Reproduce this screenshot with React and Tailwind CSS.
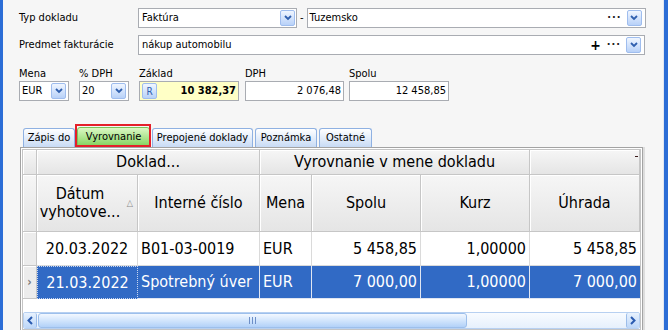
const font = "font-['DejaVu_Sans_Condensed','Liberation_Sans',sans-serif]";

function Drop() {
  return (
    <span className="flex h-[16px] w-[15px] shrink-0 items-center justify-center rounded-[2px] border border-[#9fbdee] bg-gradient-to-b from-[#f0f6ff] to-[#b8d1f8]">
      <svg width="8" height="6" viewBox="0 0 8 6">
        <path d="M1 1 L4 4 L7 1" stroke="#2f5fae" strokeWidth="1.8" fill="none" />
      </svg>
    </span>
  );
}

function Dots() {
  return <span className="text-[11px] font-bold leading-none tracking-[1px] text-[#222]">···</span>;
}

function Tab({ label, w, active }) {
  if (active) {
    return (
      <div className={`relative mr-[2px] flex h-[20px] ${w} items-center justify-center rounded-t-[3px] border border-[#7cc25a] bg-gradient-to-b from-[#dcf8c4] to-[#82d35c] text-[11px] text-black`}>
        {label}
        <div className="absolute -left-[3px] -right-[2px] -top-[4px] -bottom-[1px] border-2 border-[#e4202a]" />
      </div>
    );
  }
  return (
    <div className={`mr-[2px] flex h-[19px] ${w} items-center justify-center rounded-t-[3px] border border-b-0 border-[#8fb1e2] bg-gradient-to-b from-[#ffffff] to-[#c8dbf5] text-[11px] text-black`}>
      {label}
    </div>
  );
}

const hd = "border-r border-b border-[#c6c6c6] bg-gradient-to-b from-[#f6f6f6] to-[#e5e5e5] shadow-[inset_1px_1px_0_#ffffff]";

export default function App() {
  return (
    <div className={`flex h-[330px] w-[668px] overflow-hidden bg-[#f6f6f6] ${font}`}>
      <div className="w-[3px] shrink-0 bg-[#2c6dd6]" />
      <div className="flex w-[660px] flex-col pl-[16px] text-[11px] text-black">
        {/* Typ dokladu */}
        <div className="mt-[8px] flex h-[20px] items-center">
          <div className="w-[119px]">Typ dokladu</div>
          <div className="flex h-[20px] w-[159px] items-center justify-between border border-[#a9acb2] bg-white pl-[3px] pr-[1px]">
            <span>Faktúra</span>
            <Drop />
          </div>
          <span className="mx-[3px]">-</span>
          <div className="flex h-[20px] w-[339px] items-center border border-[#a9acb2] bg-white pl-[2px] pr-[3px]">
            <span className="flex-1">Tuzemsko</span>
            <span className="mr-[5px]"><Dots /></span>
            <Drop />
          </div>
        </div>
        {/* Predmet */}
        <div className="mt-[7px] flex h-[20px] items-center">
          <div className="w-[119px]">Predmet fakturácie</div>
          <div className="flex h-[20px] w-[507px] items-center border border-[#a9acb2] bg-white pl-[3px] pr-[3px]">
            <span className="flex-1">nákup automobilu</span>
            <span className="mr-[6px] text-[14px] font-bold leading-none">+</span>
            <span className="mr-[5px]"><Dots /></span>
            <Drop />
          </div>
        </div>
        {/* amounts */}
        <div className="mt-[12px] flex">
          <div className="w-[50px]">
            <div className="h-[14px] leading-[14px]">Mena</div>
            <div className="flex h-[20px] items-center justify-between border border-[#a9acb2] bg-white pl-[2px] pr-[2px]">
              <span>EUR</span>
              <Drop />
            </div>
          </div>
          <div className="ml-[10px] w-[50px]">
            <div className="h-[14px] leading-[14px]">% DPH</div>
            <div className="flex h-[20px] items-center justify-between border border-[#a9acb2] bg-white pl-[2px] pr-[2px]">
              <span>20</span>
              <Drop />
            </div>
          </div>
          <div className="ml-[10px] w-[100px]">
            <div className="h-[14px] leading-[14px]">Základ</div>
            <div className="flex h-[20px] items-center justify-between border border-[#a9acb2] bg-[#ffffc6] pl-[2px] pr-[2px]">
              <span className="flex h-[16px] w-[15px] items-center justify-center rounded-[2px] border border-[#9fbdee] bg-gradient-to-b from-[#f0f6ff] to-[#b8d1f8] text-[10px] text-[#2f5fae]">R</span>
              <span className="font-bold">10 382,37</span>
            </div>
          </div>
          <div className="ml-[6px] w-[99px]">
            <div className="h-[14px] leading-[14px]">DPH</div>
            <div className="flex h-[20px] items-center justify-end border border-[#a9acb2] bg-white pr-[2px]">
              2 076,48
            </div>
          </div>
          <div className="ml-[5px] w-[100px]">
            <div className="h-[14px] leading-[14px]">Spolu</div>
            <div className="flex h-[20px] items-center justify-end border border-[#a9acb2] bg-white pr-[2px]">
              12 458,85
            </div>
          </div>
        </div>
        {/* tabs */}
        <div className="ml-[4px] mt-[26px] flex h-[20px] items-end">
          <Tab label="Zápis do" w="w-[52px]" />
          <Tab label="Vyrovnanie" w="w-[73px]" active />
          <Tab label="Prepojené doklady" w="w-[101px]" />
          <Tab label="Poznámka" w="w-[62px]" />
          <Tab label="Ostatné" w="w-[53px]" />
        </div>
        {/* grid frame */}
        <div className="ml-[1px] w-[623px] flex-1 border border-[#a3a3a3] bg-white p-[1px] shadow-[2px_0_0_#dddddd]">
          <div className="h-full border border-[#c4c4c4] bg-white">
            <div className="grid grid-cols-[14px_101px_122px_52px_109px_109px_110px] text-[16px] text-black">
              {/* band row */}
              <div className={`h-[25px] ${hd}`} />
              <div className={`col-span-2 flex h-[25px] items-center justify-center ${hd}`}>Doklad...</div>
              <div className={`col-span-3 flex h-[25px] items-center justify-center ${hd}`}>Vyrovnanie v mene dokladu</div>
              <div className={`relative h-[25px] ${hd}`}>
                <div className="absolute right-[1px] top-[6px] h-[1px] w-[3px] bg-[#3a1a1a]" />
              </div>
              {/* column headers */}
              <div className={`h-[57px] ${hd}`} />
              <div className={`relative flex h-[57px] items-center justify-center pr-[14px] text-center ${hd}`}>
                <div className="flex flex-col items-center leading-[18px]">
                  <span>Dátum</span>
                  <span>vyhotove...</span>
                </div>
                <span className="absolute right-[4px] top-[24px] text-[9px] leading-none text-[#8a8a8a]">△</span>
              </div>
              <div className={`flex h-[57px] items-center justify-center ${hd}`}>Interné číslo</div>
              <div className={`flex h-[57px] items-center justify-center ${hd}`}>Mena</div>
              <div className={`flex h-[57px] items-center justify-center ${hd}`}>Spolu</div>
              <div className={`flex h-[57px] items-center justify-center ${hd}`}>Kurz</div>
              <div className={`flex h-[57px] items-center justify-center ${hd}`}>Úhrada</div>
              {/* row 1 */}
              <div className="h-[34px] border-r border-b border-[#c6c6c6] bg-[#ececec] shadow-[inset_1px_1px_0_#ffffff]" />
              <div className="flex h-[34px] items-center justify-center border-r border-b border-[#dadada]">20.03.2022</div>
              <div className="flex h-[34px] items-center border-r border-b border-[#dadada] pl-[3px]">B01-03-0019</div>
              <div className="flex h-[34px] items-center border-r border-b border-[#dadada] pl-[3px]">EUR</div>
              <div className="flex h-[34px] items-center justify-end border-r border-b border-[#dadada] pr-[3px]">5 458,85</div>
              <div className="flex h-[34px] items-center justify-end border-r border-b border-[#dadada] pr-[3px]">1,00000</div>
              <div className="flex h-[34px] items-center justify-end border-b border-[#dadada] pr-[3px]">5 458,85</div>
              {/* row 2 selected */}
              <div className="flex h-[33px] items-center justify-center border-r border-b border-[#c6c6c6] bg-[#ececec] text-[12px] font-bold text-[#7a7a7a] shadow-[inset_1px_1px_0_#ffffff]">›</div>
              <div className="flex h-[33px] items-center justify-center border border-dotted border-[#c8d6f0] bg-[#316ac5] text-white">21.03.2022</div>
              <div className="flex h-[33px] items-center border-r border-b border-[#e0e6f2] bg-[#316ac5] pl-[3px] text-white">Spotrebný úver</div>
              <div className="flex h-[33px] items-center border-r border-b border-[#e0e6f2] bg-[#316ac5] pl-[3px] text-white">EUR</div>
              <div className="flex h-[33px] items-center justify-end border-r border-b border-[#e0e6f2] bg-[#316ac5] pr-[3px] text-white">7 000,00</div>
              <div className="flex h-[33px] items-center justify-end border-r border-b border-[#e0e6f2] bg-[#316ac5] pr-[3px] text-white">1,00000</div>
              <div className="flex h-[33px] items-center justify-end border-b border-[#e0e6f2] bg-[#316ac5] pr-[3px] text-white">7 000,00</div>
            </div>
            {/* scrollbar */}
            <div className="mt-[13px] flex h-[17px] rounded-[2px] border border-[#b7d0f1] bg-gradient-to-b from-[#f8fbff] to-[#e6f0fc]">
              <div className="flex w-[13px] items-center justify-center rounded-[2px] border-r border-[#9cbde9] bg-gradient-to-b from-[#e8f2fe] to-[#bcd6f8]">
                <svg width="6" height="9" viewBox="0 0 6 9"><path d="M5 1 L1.5 4.5 L5 8" stroke="#2a5bb0" strokeWidth="2" fill="none" /></svg>
              </div>
              <div className="relative ml-[1px] flex w-[429px] items-center justify-center rounded-[3px] border border-[#9dbfeb] bg-gradient-to-b from-[#f3f8ff] via-[#d2e5fc] to-[#b2d1f8]">
                <svg width="7" height="7" viewBox="0 0 7 7"><path d="M0.5 0 V7 M3.5 0 V7 M6.5 0 V7" stroke="#6d8fc7" strokeWidth="1" /></svg>
              </div>
              <div className="flex-1" />
              <div className="flex w-[13px] items-center justify-center rounded-[2px] border-l border-[#9cbde9] bg-gradient-to-b from-[#e8f2fe] to-[#bcd6f8]">
                <svg width="6" height="9" viewBox="0 0 6 9"><path d="M1 1 L4.5 4.5 L1 8" stroke="#2a5bb0" strokeWidth="2" fill="none" /></svg>
              </div>
            </div>
          </div>
        </div>
      </div>
      <div className="w-[1px] shrink-0 bg-[#dfe6f2]" />
      <div className="w-[4px] shrink-0 bg-[#2c6dd6]" />
    </div>
  );
}
